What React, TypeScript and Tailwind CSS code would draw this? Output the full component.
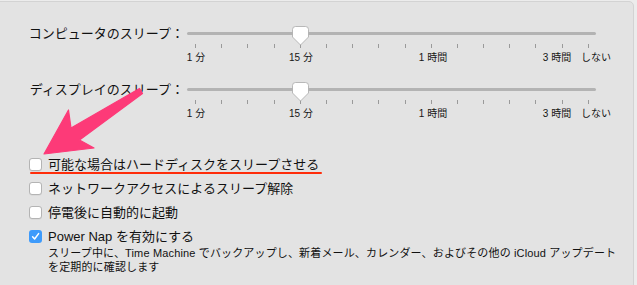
import type { ReactNode } from 'react';

const TICKS = Array.from({ length: 16 });

const STOPS = [
  { label: '1 分', center: 9 },
  { label: '15 分', center: 114 },
  { label: '1 時間', center: 246 },
  { label: '3 時間', center: 370 },
  { label: 'しない', center: 409 },
];

function SleepSlider({ label }: { label: string }) {
  return (
    <div>
      <div className="flex h-[20px] items-center">
        <div className="w-[184px] whitespace-nowrap text-right text-[13px] leading-none text-[#111]">
          {label}
        </div>
        <div className="relative ml-[3px] h-[3px] w-[409px] rounded-full bg-[#b3b3b3]">
          {/* つまみ */}
          <svg
            className="absolute left-[105px] top-[-6px]"
            width="17"
            height="20"
            viewBox="0 0 17 20"
            aria-hidden
          >
            <path
              d="M3.5 0.5 H13.5 Q16.5 0.5 16.5 3.5 V11 L8.5 19 L0.5 11 V3.5 Q0.5 0.5 3.5 0.5 Z"
              fill="#ffffff"
              stroke="#a9a9a9"
              strokeWidth="0.8"
            />
          </svg>
        </div>
      </div>
      <div className="ml-[195px] mt-px flex h-[4px] w-[394px] justify-between">
        {TICKS.map((_, i) => (
          <span key={i} className="h-full w-px bg-[#9a9a9a]" />
        ))}
      </div>
      <div className="relative ml-[187px] mt-[3px] h-[14px] w-[420px]">
        {STOPS.map((s) => (
          <span
            key={s.label}
            className="absolute top-0 -translate-x-1/2 whitespace-nowrap text-[10px] leading-[14px] text-[#151515]"
            style={{ left: s.center }}
          >
            {s.label}
          </span>
        ))}
      </div>
    </div>
  );
}

function Checkbox({ checked = false }: { checked?: boolean }) {
  if (checked) {
    return (
      <span className="flex size-[13px] items-center justify-center rounded-[3px] bg-[#3e9bfb]">
        <svg width="9" height="9" viewBox="0 0 9 9" aria-hidden>
          <path d="M1.6 4.8 L3.6 7 L7.6 1.6" fill="none" stroke="#fff" strokeWidth="1.5" strokeLinecap="round" strokeLinejoin="round" />
        </svg>
      </span>
    );
  }
  return (
    <span className="size-[13px] rounded-[3px] border border-[#b4b4b4] bg-white shadow-[0_0.5px_0.5px_rgba(0,0,0,0.08)]" />
  );
}

function OptionRow({ checked, children }: { checked?: boolean; children: ReactNode }) {
  return (
    <div className="flex h-[24px] items-center gap-[6px] pl-[29px]">
      <Checkbox checked={checked} />
      <span className="whitespace-nowrap text-[13px] leading-none text-[#111]">{children}</span>
    </div>
  );
}

export default function App() {
  return (
    <div className="relative h-[285px] w-[637px] overflow-hidden bg-[#ececec] font-['Liberation_Sans','Noto_Sans_CJK_JP',sans-serif]">
      <div className="-ml-2 mr-[3px] mt-px h-[300px] rounded-[5px] border border-[#d3d3d3] bg-[#e3e3e3] pl-[7px] pt-[21px]">
        <SleepSlider label="コンピュータのスリープ：" />
        <div className="mt-[14px]">
          <SleepSlider label="ディスプレイのスリープ：" />
        </div>

        <div className="mt-[31px]">
          <OptionRow>可能な場合はハードディスクをスリープさせる</OptionRow>
          <OptionRow>ネットワークアクセスによるスリープ解除</OptionRow>
          <OptionRow>停電後に自動的に起動</OptionRow>
          <OptionRow checked>Power Nap を有効にする</OptionRow>
          <div className="-mt-[2px] pl-[48px] text-[11px] leading-[14px] tracking-[0.15px] text-[#111]">
            <p className="whitespace-nowrap">
              スリープ中に、Time Machine でバックアップし、新着メール、カレンダー、およびその他の iCloud アップデート
            </p>
            <p className="whitespace-nowrap">を定期的に確認します</p>
          </div>
        </div>
      </div>

      {/* 注釈：赤い下線 */}
      <div className="absolute left-[30px] top-[172px] h-[2px] w-[292px] rounded-full bg-[#ff2d0a]" />

      {/* 注釈：ピンクの矢印 */}
      <svg className="absolute left-0 top-0" width="637" height="285" aria-hidden>
        <polygon
          points="44,154 68.5,110 71,128 139.5,88.5 142.5,93.5 79.5,140 94,148"
          fill="#fd3a78"
          stroke="#fd3a78"
          strokeWidth="1.2"
          strokeLinejoin="round"
        />
      </svg>
    </div>
  );
}
